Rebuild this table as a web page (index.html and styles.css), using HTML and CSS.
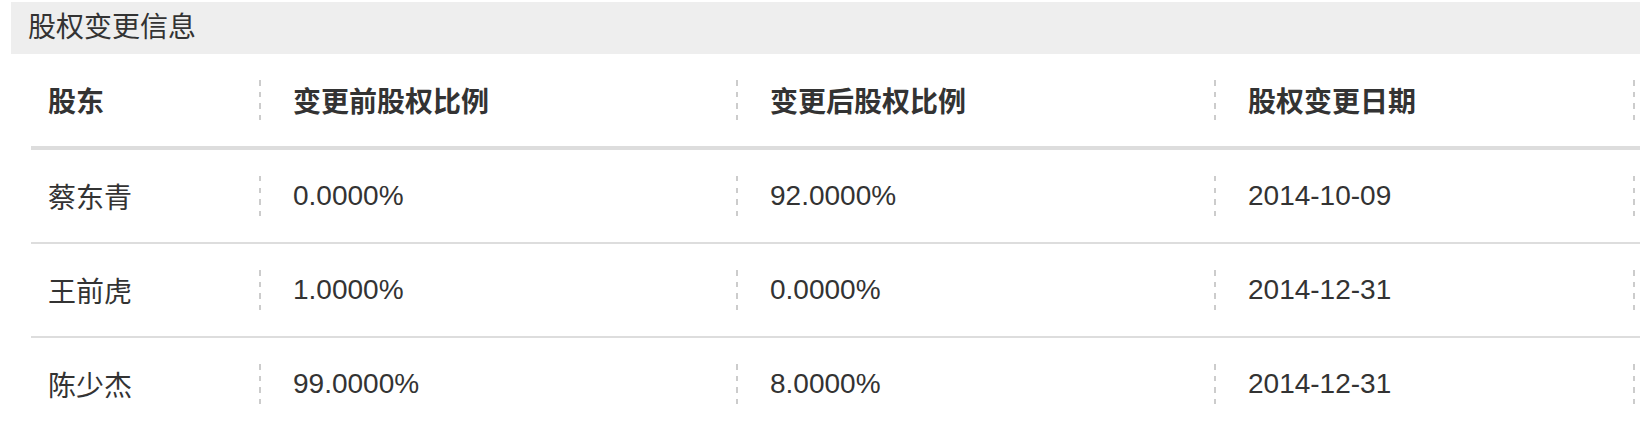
FILE: index.html
```html
<!DOCTYPE html>
<html lang="zh-CN">
<head>
<meta charset="utf-8">
<title>股权变更信息</title>
<link rel="stylesheet" href="styles.css">
</head>
<body>
<section class="panel">
  <h2 class="panel-title">股权变更信息</h2>
  <div class="table">
    <div class="row head">
      <div class="cell first">股东</div>
      <div class="cell">变更前股权比例</div>
      <div class="cell">变更后股权比例</div>
      <div class="cell">股权变更日期</div>
      <div class="cell"></div>
    </div>
    <div class="row">
      <div class="cell first">蔡东青</div>
      <div class="cell">0.0000%</div>
      <div class="cell">92.0000%</div>
      <div class="cell">2014-10-09</div>
      <div class="cell"></div>
    </div>
    <div class="row">
      <div class="cell first">王前虎</div>
      <div class="cell">1.0000%</div>
      <div class="cell">0.0000%</div>
      <div class="cell">2014-12-31</div>
      <div class="cell"></div>
    </div>
    <div class="row last">
      <div class="cell first">陈少杰</div>
      <div class="cell">99.0000%</div>
      <div class="cell">8.0000%</div>
      <div class="cell">2014-12-31</div>
      <div class="cell"></div>
    </div>
  </div>
</section>
</body>
</html>
```
FILE: styles.css
```css
html, body {
  margin: 0;
  padding: 0;
  background: #fff;
}
body {
  font-family: "Liberation Sans", "Noto Sans CJK SC", sans-serif;
  color: #333;
  overflow: hidden;
}
.panel {
  padding: 2px 0 0 11px;
}
.panel-title {
  margin: 0;
  height: 52px;
  line-height: 52px;
  padding-left: 17px;
  background: #eee;
  font-size: 28px;
  font-weight: normal;
  color: #333;
}
.table {
  margin-left: 20px;
}
.row {
  display: grid;
  grid-template-columns: 228px 477px 478px 419px 1fr;
  height: 92px;
  border-bottom: 2px solid #ddd;
  font-size: 28px;
}
.row.head {
  border-bottom: 4px solid #ddd;
  font-weight: bold;
}
.row.last {
  border-bottom: none;
}
.cell {
  display: flex;
  align-items: center;
  white-space: nowrap;
}
.cell::before {
  content: "";
  flex: none;
  width: 2px;
  height: 40px;
  margin-right: 32px;
  background: repeating-linear-gradient(to bottom, #ccc 0 5.5px, transparent 5.5px 11.6px);
}
.cell.first {
  padding-left: 17px;
}
.cell.first::before {
  display: none;
}
```
